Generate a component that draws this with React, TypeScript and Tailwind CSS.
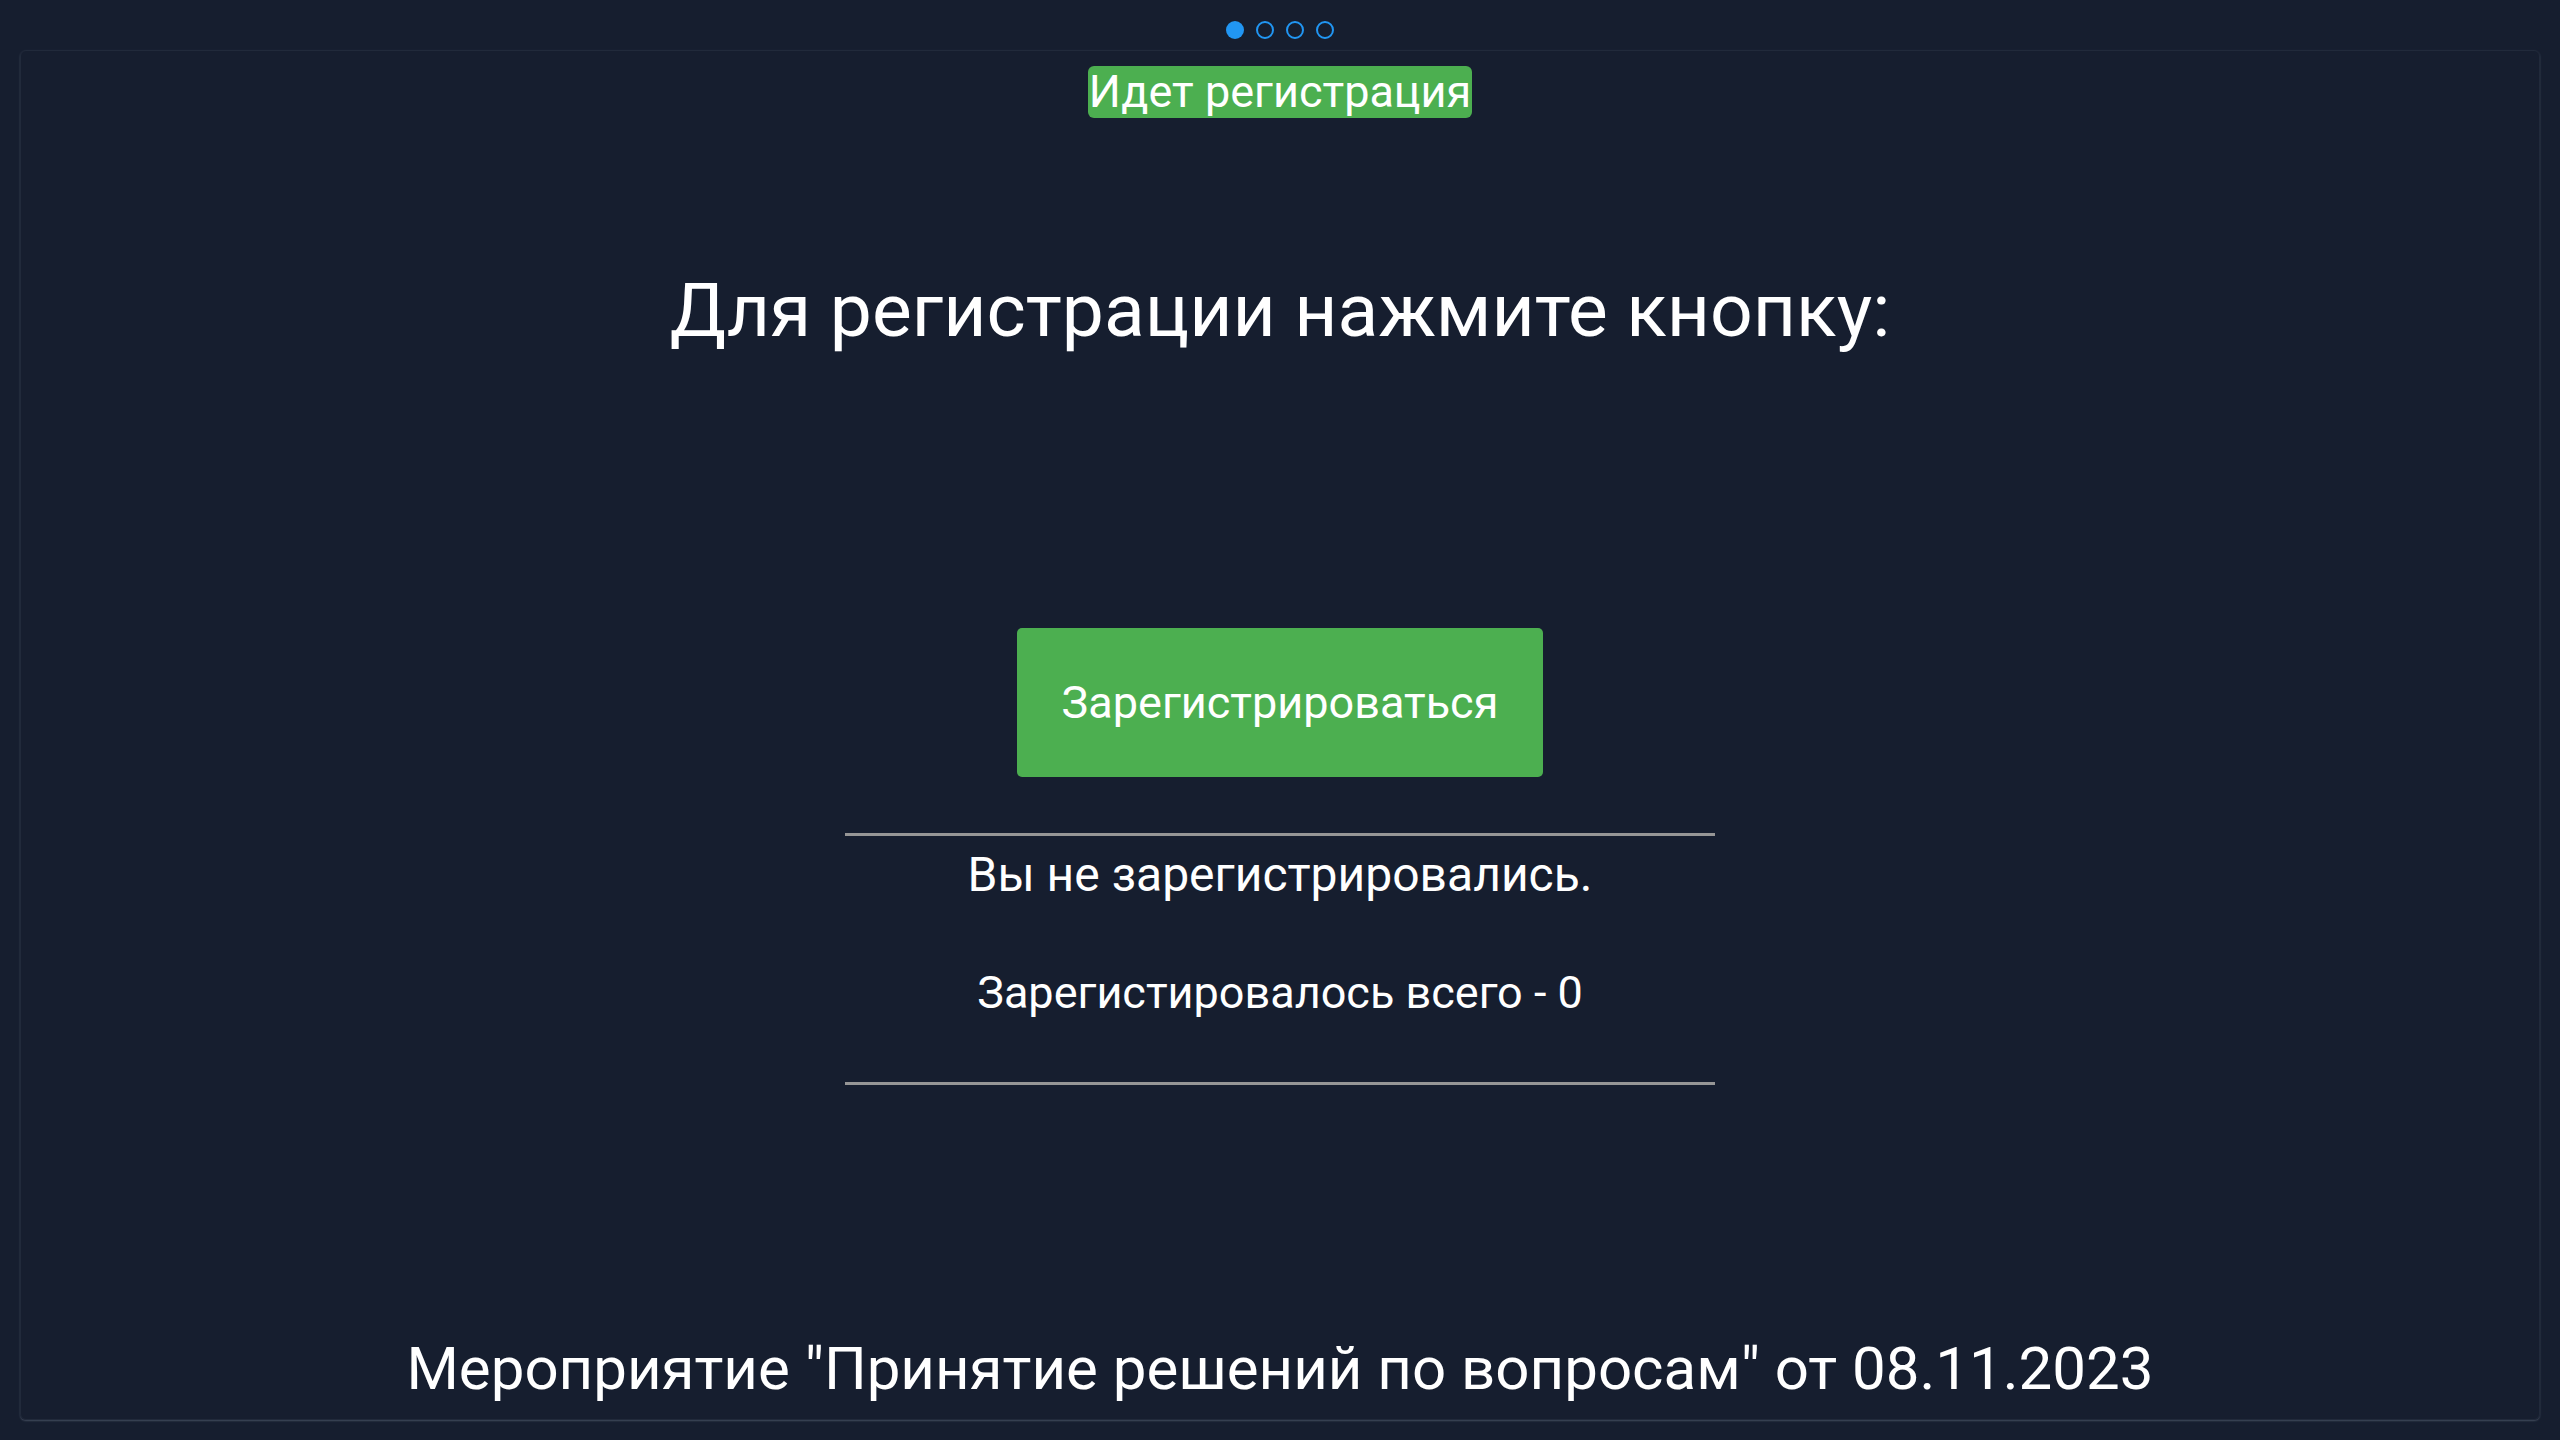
export default function App() {
  const dots = [true, false, false, false]

  return (
    <div className="h-[1440px] w-full bg-[#161e2f] flex flex-col font-['Roboto',sans-serif] text-white">
      {/* Slide pager */}
      <div className="h-[50px] flex items-start justify-center gap-[12px] pt-[21px]">
        {dots.map((active, i) => (
          <span
            key={i}
            className={`w-[18px] h-[18px] rounded-full ${
              active ? 'bg-[#2196f3]' : 'border-2 border-[#2196f3]'
            }`}
          />
        ))}
      </div>

      <div className="mx-[20px] h-[1370px] rounded-[6px] border border-[#212a3b] shadow-[0_1px_2px_rgba(200,210,230,0.25)] flex flex-col items-center">
        <div className="mt-[15px] bg-[#4caf50] rounded-[6px] text-[45px] leading-[52px] px-[1px]">
          Идет регистрация
        </div>

        <h1 className="mt-[148px] text-[75px] leading-[88px] font-normal">
          Для регистрации нажмите кнопку:
        </h1>

        <button className="mt-[274px] w-[526px] h-[149px] rounded-[5px] bg-[#4caf50] text-[45px] leading-none text-white">
          Зарегистрироваться
        </button>

        <div className="mt-[56px] w-[870px] flex flex-col items-center border-t-[3px] border-b-[3px] border-[#969696]">
          <p className="mt-[11px] text-[48px] leading-[56px]">Вы не зарегистрировались.</p>
          <p className="mt-[64px] mb-[63px] text-[45px] leading-[52px]">Зарегистировалось всего - 0</p>
        </div>

        <div className="mt-auto pb-[15px] text-[60px] leading-[70px]">
          Мероприятие "Принятие решений по вопросам" от 08.11.2023
        </div>
      </div>
    </div>
  )
}
